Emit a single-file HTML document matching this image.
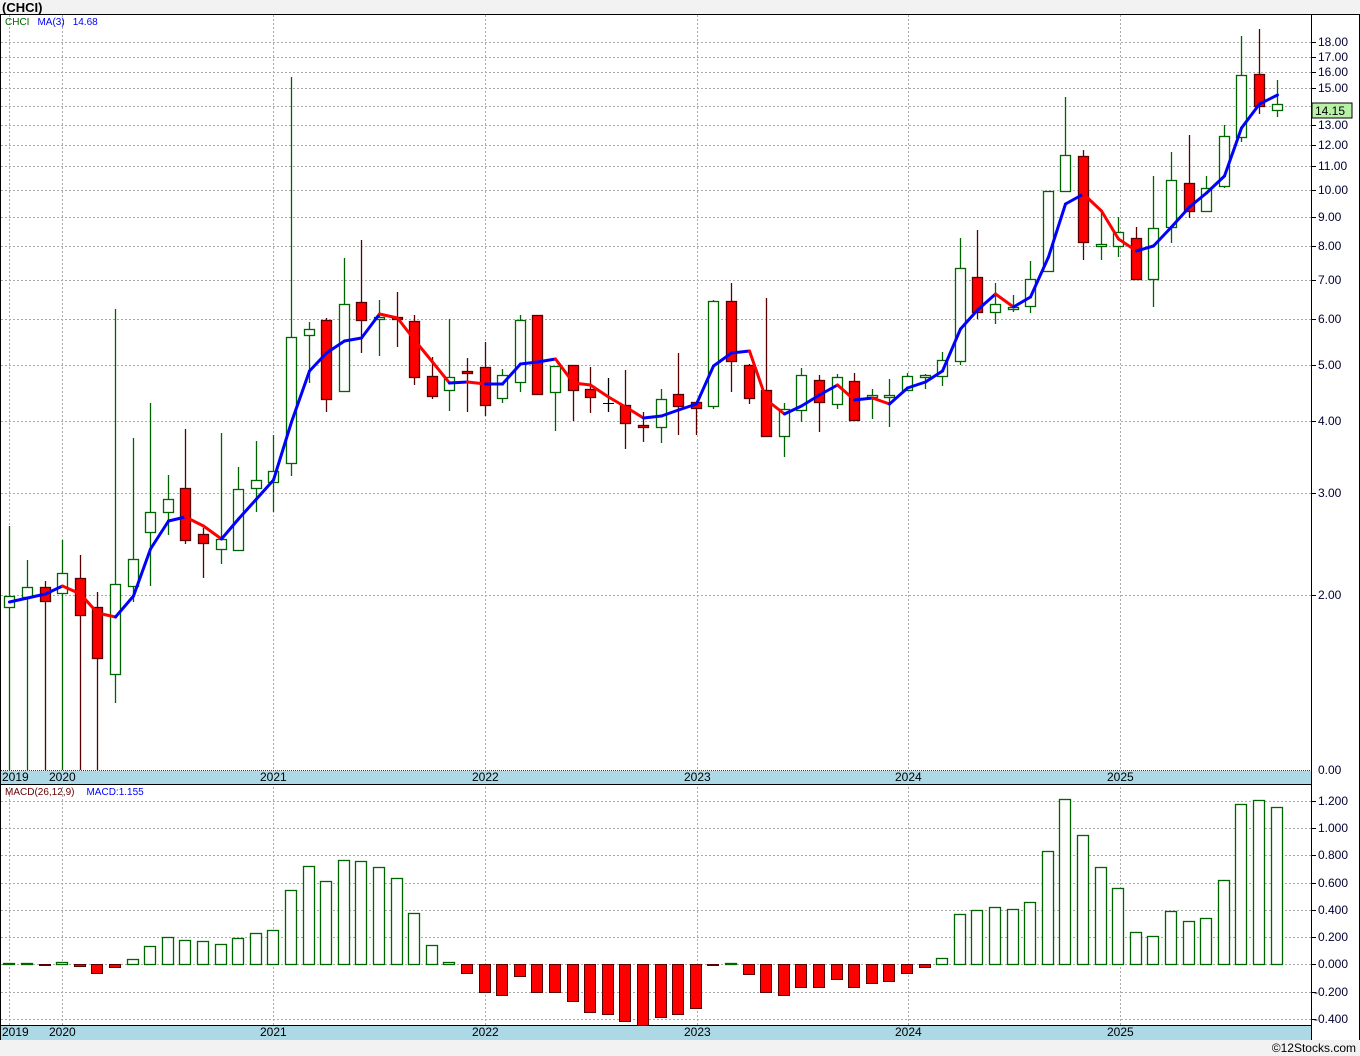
<!DOCTYPE html>
<html><head><meta charset="utf-8"><style>
html,body{margin:0;padding:0;background:#f2f2f2;}
svg{display:block;font-family:"Liberation Sans",sans-serif;}
</style></head><body>
<svg id="s" width="1360" height="1056" viewBox="0 0 1360 1056" xmlns="http://www.w3.org/2000/svg">
<rect x="0" y="0" width="1360" height="1056" fill="#f2f2f2"/>
<text x="2" y="12" font-size="13" font-weight="bold" fill="#000">(CHCI)</text>
<rect x="0" y="14" width="1359" height="1026" fill="#fff"/>
<g id="grid" stroke="#aaa" stroke-dasharray="2,2" stroke-width="1"></g>
<rect x="1" y="771" width="1310" height="13" fill="#add8e6"/>
<rect x="1" y="1026" width="1310" height="14" fill="#add8e6"/>
<line x1="1" y1="770.5" x2="1311" y2="770.5" stroke="#333" stroke-dasharray="1,1"/>
<line x1="0" y1="784.5" x2="1311" y2="784.5" stroke="#000"/>
<line x1="0" y1="1025.5" x2="1311" y2="1025.5" stroke="#000"/>
<line x1="0" y1="14.5" x2="1359" y2="14.5" stroke="#000"/>
<line x1="0.5" y1="14" x2="0.5" y2="1040" stroke="#000"/>
<line x1="1311.5" y1="14" x2="1311.5" y2="1040" stroke="#000"/>
<line x1="1359.5" y1="14" x2="1359.5" y2="1040" stroke="#000"/>
<g id="c"></g>
<g font-size="12" fill="#000">
<text x="2" y="781">2019</text><text x="49" y="781">2020</text><text x="260" y="781">2021</text><text x="472" y="781">2022</text><text x="684" y="781">2023</text><text x="895" y="781">2024</text><text x="1107" y="781">2025</text>
<text x="2" y="1036">2019</text><text x="49" y="1036">2020</text><text x="260" y="1036">2021</text><text x="472" y="1036">2022</text><text x="684" y="1036">2023</text><text x="895" y="1036">2024</text><text x="1107" y="1036">2025</text>
</g>
<g font-size="12" fill="#000033">
<text x="1318" y="46">18.00</text><text x="1318" y="61">17.00</text><text x="1318" y="76">16.00</text><text x="1318" y="92">15.00</text>
<text x="1318" y="129">13.00</text><text x="1318" y="149">12.00</text><text x="1318" y="170">11.00</text><text x="1318" y="194">10.00</text>
<text x="1318" y="221">9.00</text><text x="1318" y="250">8.00</text><text x="1318" y="284">7.00</text><text x="1318" y="323">6.00</text>
<text x="1318" y="369">5.00</text><text x="1318" y="425">4.00</text><text x="1318" y="497">3.00</text><text x="1318" y="599">2.00</text>
<text x="1318" y="774">0.00</text>
<text x="1318" y="805">1.200</text><text x="1318" y="832">1.000</text><text x="1318" y="859">0.800</text><text x="1318" y="887">0.600</text>
<text x="1318" y="914">0.400</text><text x="1318" y="941">0.200</text><text x="1318" y="968">0.000</text><text x="1314" y="996">-0.200</text><text x="1314" y="1023">-0.400</text>
</g>
<rect x="1312" y="103" width="40" height="15" fill="#b8f0a8" stroke="#000"/>
<text x="1315" y="115" font-size="12" fill="#000">14.15</text>
<text x="5" y="25" font-size="10"><tspan fill="#006400">CHCI</tspan><tspan fill="#0000ff" dx="8">MA(3)</tspan><tspan fill="#0000ff" dx="8">14.68</tspan></text>
<text x="5" y="795" font-size="10"><tspan fill="#600">MACD(26,12,9)</tspan><tspan fill="#0000ff" dx="12">MACD:1.155</tspan></text>
<text x="1356" y="1052" font-size="12" fill="#000" text-anchor="end">©12Stocks.com</text>
</svg>
<script>
var NS="http://www.w3.org/2000/svg";
function el(p,t,a){var e=document.createElementNS(NS,t);for(var k in a)e.setAttribute(k,a[k]);p.appendChild(e);return e;}
var g=document.getElementById('grid'),c=document.getElementById('c');
[42,57,72,88,106,125,145,166,190,217,246,280,319,365,421,493,595,801,828,855,883,910,937,964,992,1019].forEach(function(y){el(g,'line',{x1:1,y1:y+.5,x2:1311,y2:y+.5});el(c,'line',{x1:1311,y1:y+.5,x2:1316,y2:y+.5,stroke:'#000'});});
[9,62,273,485,697,908,1120].forEach(function(x){el(g,'line',{x1:x+.5,y1:15,x2:x+.5,y2:1025});});
// color,high,boxTop,boxBottom,low
var C=[
['g',526,596,607,770],['g',560,587,597,770],['r',581,587,601,770],['g',540,573,593,770],['r',555,578,615,770],['r',592,607,658,770],
['g',309,584,674,703],['g',438,559,586,602],['g',403,512,532,586],['g',475,499,512,535],['r',429,488,540,544],['r',528,534,543,578],
['g',433,539,549,564],['g',467,489,550,551],['g',441,480,488,512],['g',435,471,482,512],['g',77,337,463,476],['g',322,329,335,383],
['r',318,320,399,412],['g',258,304,391,391],['r',240,302,320,353],['g',300,317,319,356],['r',292,317,319,347],['r',315,321,377,385],
['r',357,376,396,399],['g',319,377,390,411],['r',358,371,373,412],['r',342,367,405,416],['g',369,375,398,403],['g',315,320,382,392],
['r',315,315,394,394],['g',366,366,392,431],['r',365,365,390,421],['r',367,389,397,413],['k',378,403,404,412],['r',370,405,423,449],
['r',412,425,427,442],['g',389,399,427,443],['r',353,394,406,435],['r',402,402,408,435],['g',300,301,406,409],['r',283,301,361,392],
['r',364,365,398,404],['r',298,390,436,436],['g',403,409,436,457],['g',368,375,410,422],['r',375,380,402,432],['g',374,377,404,409],
['r',373,381,420,420],['g',389,395,397,419],['g',379,395,397,427],['g',373,376,390,390],['g',374,375,377,389],['g',352,360,376,386],
['g',238,268,361,365],['r',230,277,312,319],['g',283,304,312,324],['g',295,307,309,312],['g',261,279,306,313],['g',191,191,271,271],
['g',97,155,191,191],['r',150,156,242,260],['g',210,244,246,260],['g',217,232,246,257],['r',227,238,279,279],['g',176,228,279,307],
['g',152,180,227,243],['r',135,183,211,218],['g',176,188,211,211],['g',125,136,186,188],['g',36,75,137,142],['r',29,74,106,114],['g',80,104,110,117]];
var X=function(i){return Math.round(9.3+17.6*i);};
C.forEach(function(d,i){var x=X(i);var st=d[0]=='g'?'#006400':(d[0]=='r'?'#5a0000':'#000');
el(c,'line',{x1:x+.5,y1:d[1],x2:x+.5,y2:d[4],stroke:st,'stroke-width':1.3});
var h=Math.max(d[3]-d[2],1);
if(d[0]=='k'){el(c,'line',{x1:x-5,y1:d[2]+.5,x2:x+6,y2:d[2]+.5,stroke:'#000'});}
else el(c,'rect',{x:x-4.5,y:d[2]+.5,width:10,height:h,fill:d[0]=='g'?'#fff':'#f00',stroke:st,'stroke-width':1.3});});
var M=[602,598,594,586,594,613,617,596,549,521,517,526,539,519,499,480,422,371,353,341,338,314,318,340,362,383,382,384,384,364,362,359,383,385,397,407,418,416,410,404,366,353,351,400,414,406,395,385,400,398,404,388,382,371,329,310,294,307,297,257,204,194,211,239,251,246,227,207,193,176,128,104,95];
for(var i=0;i<M.length-1;i++){el(c,'line',{x1:X(i)+.5,y1:M[i],x2:X(i+1)+.5,y2:M[i+1],stroke:M[i+1]<=M[i]?'#0000ff':'#ff0000','stroke-width':3,'stroke-linecap':'round'});}
var B=[963,963,965,962,966,973,967,959,946,937,940,941,944,938,933,930,890,866,881,860,861,867,878,913,945,962,973,992,995,976,992,992,1001,1012,1014,1021,1025,1017,1014,1008,965,963,974,992,995,987,987,979,987,983,981,973,967,958,914,910,907,909,902,851,799,835,867,888,932,936,911,921,918,880,804,800,807];
B.forEach(function(y,i){var x=X(i);if(y<964)el(c,'rect',{x:x-5.5,y:y+.5,width:11,height:964-y,fill:'#fff',stroke:'#006400','stroke-width':1.3});
else el(c,'rect',{x:x-5.5,y:964.5,width:11,height:Math.max(y-964,1),fill:'#f00',stroke:'#5a0000','stroke-width':1});});
</script>
</body></html>
